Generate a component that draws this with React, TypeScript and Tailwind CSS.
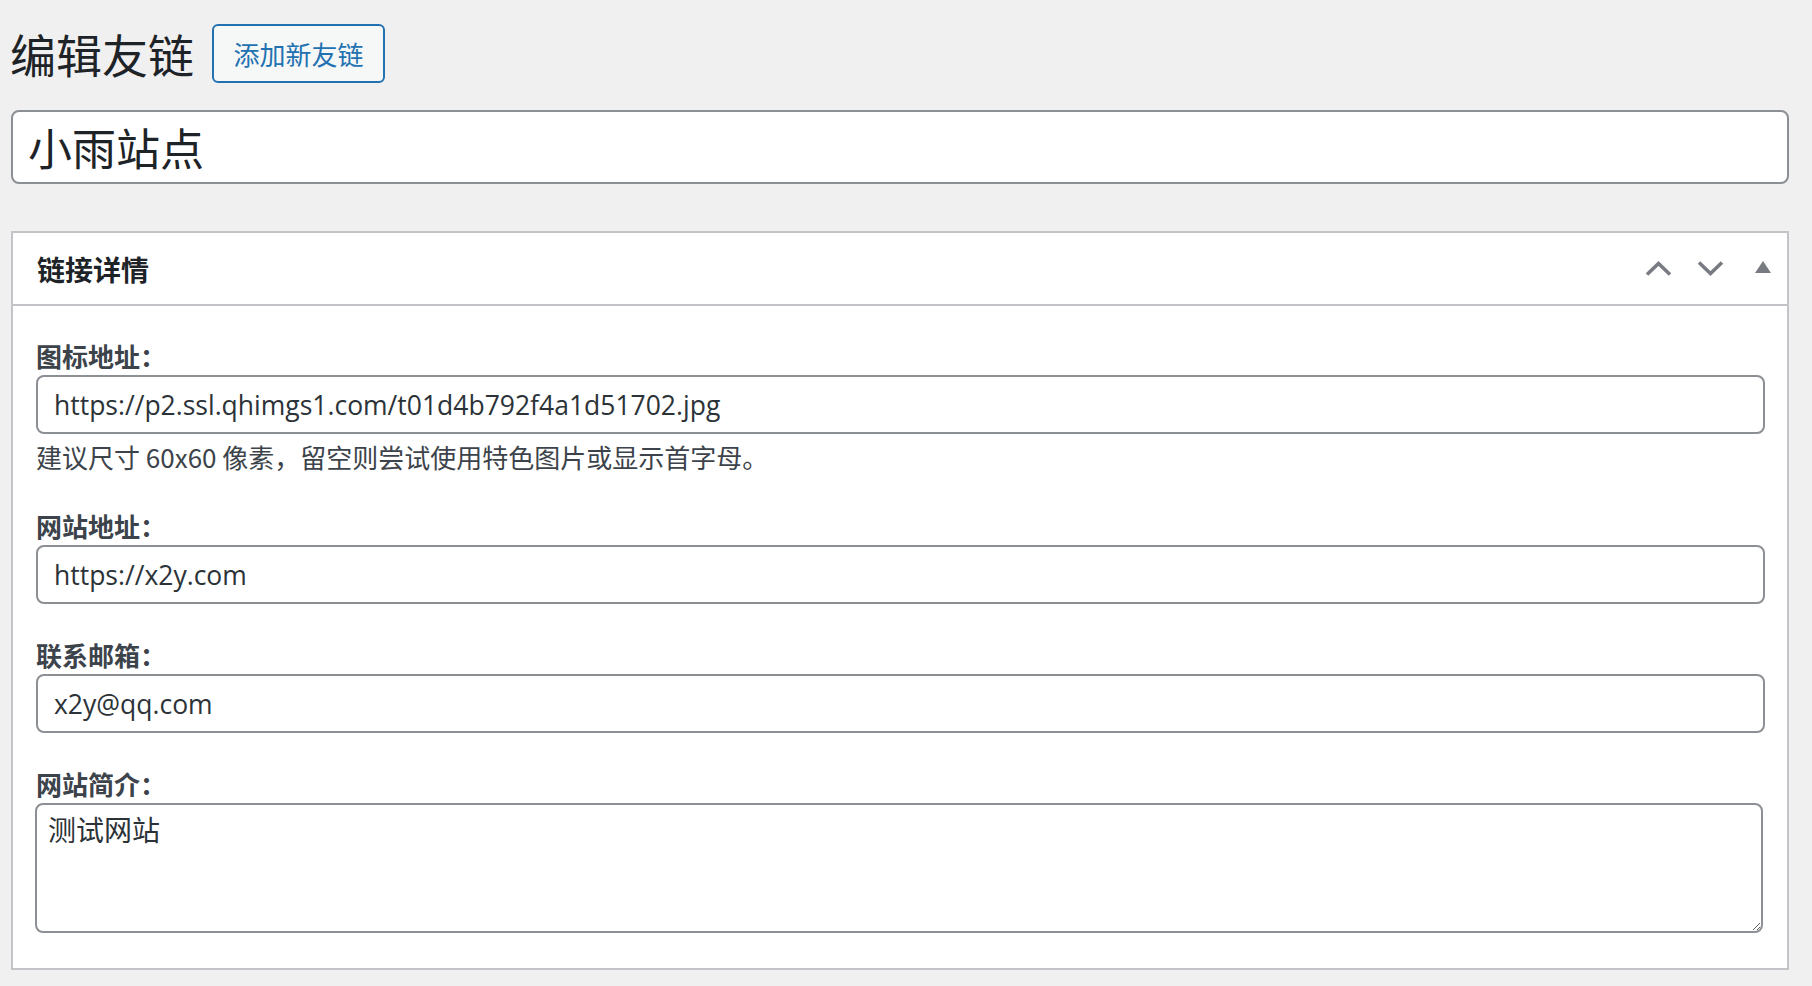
import type { ReactNode } from "react";

function ChevronUp() {
  return (
    <svg width="27" height="15" viewBox="0 0 27 15" fill="none">
      <path d="M2 13.5 L13.5 2.5 L25 13.5" stroke="#787c82" strokeWidth="3.6" />
    </svg>
  );
}

function ChevronDown() {
  return (
    <svg width="27" height="15" viewBox="0 0 27 15" fill="none">
      <path d="M2 1.5 L13.5 12.5 L25 1.5" stroke="#787c82" strokeWidth="3.6" />
    </svg>
  );
}

function Triangle() {
  return (
    <svg width="16" height="12" viewBox="0 0 16 12">
      <path d="M8 0 L16 12 L0 12 Z" fill="#787c82" />
    </svg>
  );
}

function Field({ label, first, children }: { label: string; first?: boolean; children: ReactNode }) {
  return (
    <div className={first ? "" : "mt-[34px]"}>
      <label className="-mt-px mb-px block h-[36px] text-[26px] leading-[36px] font-bold text-[#3c434a]">{label}</label>
      {children}
    </div>
  );
}

const inputCls =
  "block h-[59px] w-full rounded-[8px] border-2 border-[#8c8f94] bg-white px-[16px] font-['Open_Sans','Noto_Sans_CJK_SC',sans-serif] text-[26.5px] text-[#2c3338] outline-none";

export default function App() {
  return (
    <div className="min-h-screen bg-[#f0f0f1] pl-[11px] pr-[23px] pt-[24px] font-['Segoe_UI','Noto_Sans_CJK_SC',sans-serif] text-[#3c434a]">
      <div className="flex h-[59px] items-center">
        <h1 className="-ml-px text-[46px] font-normal leading-[59px] text-[#1d2327]">编辑友链</h1>
        <button className="ml-[18px] flex h-[59px] w-[173px] items-center justify-center rounded-[6px] border-2 border-[#2271b1] bg-[#f6f7f7] text-[26px] text-[#2271b1]">
          添加新友链
        </button>
      </div>

      <input
        className="mt-[27px] block h-[74px] w-full rounded-[8px] border-2 border-[#8c8f94] bg-white px-[15px] text-[44px] text-[#1d2327] outline-none"
        defaultValue="小雨站点"
        readOnly
      />

      <div className="mt-[47px] border-2 border-[#c3c4c7] bg-white">
        <div className="flex h-[73px] items-center justify-between border-b-2 border-[#c3c4c7] pl-[24px]">
          <h2 className="text-[28px] font-bold text-[#1d2327]">链接详情</h2>
          <div className="flex h-full">
            <button className="flex h-full w-[52px] items-center justify-center pl-[3px]">
              <ChevronUp />
            </button>
            <button className="flex h-full w-[52px] items-center justify-center pl-[3px]">
              <ChevronDown />
            </button>
            <button className="flex h-full w-[52px] items-center justify-center pb-[4px] pl-[3px]">
              <Triangle />
            </button>
          </div>
        </div>

        <div className="pb-[35px] pl-[23px] pr-[22px] pt-[33px]">
          <Field label="图标地址：" first>
            <input className={inputCls} defaultValue="https://p2.ssl.qhimgs1.com/t01d4b792f4a1d51702.jpg" readOnly />
            <p className="mt-[5px] h-[36px] text-[26px] leading-[36px] text-[#3c434a]">
              建议尺寸 60x60 像素，留空则尝试使用特色图片或显示首字母。
            </p>
          </Field>
          <div className="-mt-px">
            <Field label="网站地址：">
              <input className={inputCls} defaultValue="https://x2y.com" readOnly />
            </Field>
          </div>
          <Field label="联系邮箱：">
            <input className={inputCls} defaultValue="x2y@qq.com" readOnly />
          </Field>
          <Field label="网站简介：">
            <textarea
              className="-ml-px block h-[130px] w-[calc(100%-1px)] rounded-[8px] border-2 border-[#8c8f94] bg-white pl-[11px] pt-[3px] text-[28px] leading-[42px] text-[#2c3338] outline-none"
              defaultValue="测试网站"
              readOnly
            />
          </Field>
        </div>
      </div>
    </div>
  );
}
